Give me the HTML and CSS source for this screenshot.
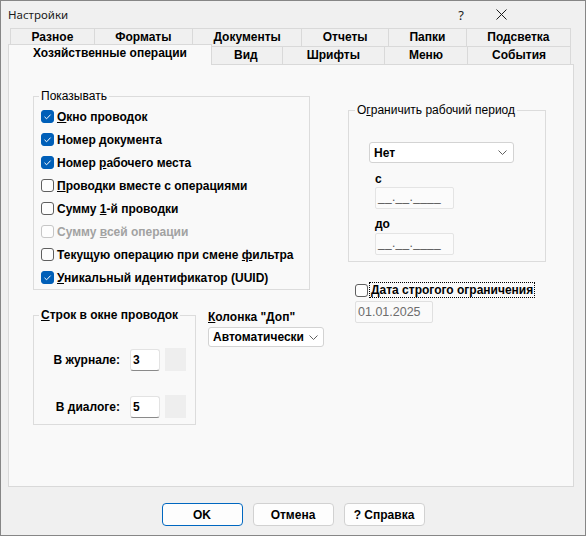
FILE: index.html
```html
<!DOCTYPE html>
<html lang="ru">
<head>
<meta charset="utf-8">
<title>Настройки</title>
<link rel="stylesheet" href="styles.css">
</head>
<body>
<div class="window">
  <div class="titlebar">
    <span class="title">Настройки</span>
    <span class="tb-btn tb-help">?</span>
    <span class="tb-btn tb-close">
      <svg width="11" height="11" viewBox="0 0 11 11"><path d="M0.5 0.5 L10.5 10.5 M10.5 0.5 L0.5 10.5" stroke="#1b1b1b" stroke-width="1" fill="none"/></svg>
    </span>
  </div>

  <div class="tabs">
    <div class="tab-row">
      <div class="tab">Разное</div>
      <div class="tab">Форматы</div>
      <div class="tab">Документы</div>
      <div class="tab">Отчеты</div>
      <div class="tab">Папки</div>
      <div class="tab">Подсветка</div>
    </div>
    <div class="tab-row">
      <div class="tab active">Хозяйственные операции</div>
      <div class="tab">Вид</div>
      <div class="tab">Шрифты</div>
      <div class="tab">Меню</div>
      <div class="tab">События</div>
    </div>
  </div>

  <div class="panel">
    <div class="col-left">
      <fieldset class="group group-show">
        <legend>Показывать</legend>
        <div class="show-list">
          <div class="check"><span class="box checked"><svg width="13" height="13" viewBox="0 0 13 13"><path d="M3.5 6.8 L5.6 8.8 L9.6 4.6" stroke="#fff" stroke-width="1" fill="none"/></svg></span><span><u>О</u>кно проводок</span></div>
          <div class="check"><span class="box checked"><svg width="13" height="13" viewBox="0 0 13 13"><path d="M3.5 6.8 L5.6 8.8 L9.6 4.6" stroke="#fff" stroke-width="1" fill="none"/></svg></span><span>Номер <u>д</u>окумента</span></div>
          <div class="check"><span class="box checked"><svg width="13" height="13" viewBox="0 0 13 13"><path d="M3.5 6.8 L5.6 8.8 L9.6 4.6" stroke="#fff" stroke-width="1" fill="none"/></svg></span><span>Номер <u>р</u>абочего места</span></div>
          <div class="check"><span class="box"></span><span><u>П</u>роводки вместе с операциями</span></div>
          <div class="check"><span class="box"></span><span>Сумму <u>1</u>-й проводки</span></div>
          <div class="check disabled"><span class="box"></span><span>Сумму <u>в</u>сей операции</span></div>
          <div class="check"><span class="box"></span><span>Текущую операцию при смене <u>ф</u>ильтра</span></div>
          <div class="check"><span class="box checked"><svg width="13" height="13" viewBox="0 0 13 13"><path d="M3.5 6.8 L5.6 8.8 L9.6 4.6" stroke="#fff" stroke-width="1" fill="none"/></svg></span><span><u>У</u>никальный идентификатор (UUID)</span></div>
        </div>
      </fieldset>

      <div class="lower">
        <fieldset class="group group-rows">
          <legend><u>С</u>трок в окне проводок</legend>
          <div class="rows-grid">
            <span class="row-label">В журнале:</span>
            <span class="spin-input">3</span>
            <span class="spin-btn"></span>
            <span class="row-label">В диалоге:</span>
            <span class="spin-input">5</span>
            <span class="spin-btn"></span>
          </div>
        </fieldset>

        <div class="extra-col">
          <div class="extra-label"><u>К</u>олонка "Доп"</div>
          <div class="select select-auto">
            <span>Автоматически</span>
            <svg width="9" height="5" viewBox="0 0 9 5"><path d="M0.5 0.5 L4.5 4.5 L8.5 0.5" stroke="#606060" stroke-width="1" fill="none"/></svg>
          </div>
        </div>
      </div>
    </div>

    <div class="col-right">
      <fieldset class="group group-period">
        <legend>О<u>г</u>раничить рабочий период</legend>
        <div class="period-body">
          <div class="select select-none">
            <span>Нет</span>
            <svg width="9" height="5" viewBox="0 0 9 5"><path d="M0.5 0.5 L4.5 4.5 L8.5 0.5" stroke="#606060" stroke-width="1" fill="none"/></svg>
          </div>
          <div class="field-label">с</div>
          <div class="date-input">__.__.____</div>
          <div class="field-label field-label-to">до</div>
          <div class="date-input date-input-to">__.__.____</div>
        </div>
      </fieldset>

      <div class="check strict">
        <span class="box"></span>
        <span class="focus-label"><u>Д</u>ата строгого ограничения</span>
      </div>
      <div class="date-fixed">01.01.2025</div>
    </div>
  </div>

  <div class="buttons">
    <button class="btn btn-primary">OK</button>
    <button class="btn">Отмена</button>
    <button class="btn">? Справка</button>
  </div>
</div>
</body>
</html>
```

FILE: styles.css
```css
* {
  box-sizing: border-box;
}

html,
body {
  margin: 0;
  padding: 0;
}

body {
  width: 586px;
  height: 536px;
  overflow: hidden;
  background: #f0f0f0;
  font-family: "Liberation Sans", Arial, sans-serif;
  font-size: 12px;
  color: #000;
}

.window {
  width: 586px;
  height: 536px;
  border: 1px solid #868686;
  background: #f0f0f0;
  display: flex;
  flex-direction: column;
}

/* ---------- title bar ---------- */
.titlebar {
  height: 27px;
  flex: none;
  display: flex;
  align-items: center;
  padding-left: 7px;
  font-family: "Noto Sans", "Liberation Sans", sans-serif;
  font-size: 11.5px;
  color: #1b1b1b;
}

.title {
  flex: 1;
}

.tb-btn {
  width: 40px;
  height: 27px;
  display: flex;
  align-items: center;
  justify-content: center;
}

.tb-help {
  font-size: 13px;
}

.tb-close {
  margin-right: 64px;
}

/* ---------- tabs ---------- */
.tabs {
  flex: none;
  width: 570px;
  padding-left: 9px;
}

.tab-row {
  display: flex;
  height: 18px;
}

.tab {
  flex: 1 1 auto;
  border: 1px solid #d9d9d9;
  border-bottom: 0;
  margin-left: -1px;
  padding: 0 6px;
  text-align: center;
  font-weight: bold;
  line-height: 16px;
  white-space: nowrap;
  background: #f0f0f0;
}

.tab:first-child {
  margin-left: 0;
}

.tab.active {
  position: relative;
  z-index: 1;
  margin: -2px -2px -1px -2px;
  padding-top: 0;
  line-height: 17px;
  background: #f9f9f9;
}

/* ---------- page panel ---------- */
.panel {
  flex: none;
  width: 566px;
  height: 423px;
  margin-left: 7px;
  border: 1px solid #d9d9d9;
  background: #f9f9f9;
  display: grid;
  grid-template-columns: 291px 198px;
  column-gap: 24px;
  padding-left: 24px;
  align-items: start;
}

.col-left {
  padding-top: 24px;
}

.col-right {
  padding-top: 38px;
}

/* group boxes */
.group {
  margin: 0;
  padding: 0;
  min-width: 0;
  border: 1px solid #dcdcdc;
}

.group legend {
  margin-left: 5px;
  padding: 0 2px;
  line-height: 14px;
  font-size: 12px;
}

.group-show {
  width: 277px;
}

.show-list {
  padding: 2px 0 0 7px;
}

/* check boxes */
.check {
  display: flex;
  align-items: center;
  height: 23px;
  font-weight: bold;
  white-space: nowrap;
}

.box {
  flex: none;
  width: 13px;
  height: 13px;
  margin-right: 3px;
  border: 1px solid #5f5f5f;
  border-radius: 3px;
  background: #fdfdfd;
  display: flex;
}

.box svg {
  margin: -1px;
}

.box.checked {
  border-color: #005fb8;
  background: #005fb8;
}

.check.disabled {
  color: #a2a2a2;
}

.check.disabled .box {
  border-color: #c6c6c6;
}

/* lower left */
.lower {
  display: flex;
  align-items: flex-start;
  gap: 12px;
  margin-top: 18px;
}

.group-rows {
  width: 163px;
}

.group-rows legend {
  font-weight: bold;
}

.rows-grid {
  display: grid;
  grid-template-columns: 86px 30px 16px;
  column-gap: 10px;
  row-gap: 24px;
  align-items: center;
  padding: 26px 0 6px 0;
}

.row-label {
  text-align: right;
  font-weight: bold;
}

.spin-input {
  height: 22px;
  padding: 1px 0 0 2px;
  line-height: 18px;
  font-weight: bold;
  background: #fff;
  border: 1px solid #e3e3e3;
  border-bottom-color: #8a8a8a;
  border-radius: 3px;
}

.spin-btn {
  height: 23px;
  margin-left: -5px;
  background: #eeeeee;
}

.extra-col {
  width: 116px;
  padding-top: 2px;
}

.extra-label {
  line-height: 14px;
  font-weight: bold;
  white-space: nowrap;
}

/* drop-down boxes */
.select {
  display: flex;
  align-items: center;
  justify-content: space-between;
  background: #fff;
  border: 1px solid #d3d3d3;
  border-radius: 3px;
  font-weight: bold;
  white-space: nowrap;
  overflow: hidden;
}

.select-auto {
  height: 20px;
  margin-top: 3px;
  padding: 0 5px 0 4px;
}

.select-none {
  width: 145px;
  height: 21px;
  padding: 0 6px 0 4px;
}

/* right column */
.group-period {
  width: 198px;
}

.group-period legend {
  margin-left: 6px;
}

.period-body {
  padding: 25px 0 6px 20px;
}

.field-label {
  margin-top: 9px;
  padding-left: 6px;
  line-height: 14px;
  font-weight: bold;
}

.field-label-to {
  margin-top: 8px;
}

.date-input {
  width: 79px;
  height: 22px;
  margin: 1px 0 0 6px;
  padding: 0 0 0 2px;
  line-height: 19px;
  color: #555;
  background: #fbfbfb;
  border: 1px solid #e4e4e4;
  border-radius: 2px;
  letter-spacing: 0.3px;
}

.date-input-to {
  margin-top: 2px;
}

.strict {
  height: 16px;
  margin: 20px 0 0 7px;
}

.strict .box {
  margin-right: 2px;
}

.focus-label {
  padding: 0 1px;
  line-height: 14px;
  outline: 1px dotted #000;
}

.date-fixed {
  width: 78px;
  height: 22px;
  margin: 3px 0 0 7px;
  padding-left: 2px;
  line-height: 20px;
  color: #6d6d6d;
  font-size: 12.5px;
  background: #fafafa;
  border: 1px solid #e0e0e0;
  border-radius: 2px;
}

/* ---------- dialog buttons ---------- */
.buttons {
  flex: none;
  display: flex;
  justify-content: center;
  gap: 10px;
  padding-top: 16px;
}

.btn {
  width: 81px;
  height: 23px;
  padding: 0;
  font-family: "Liberation Sans", Arial, sans-serif;
  font-size: 12px;
  font-weight: bold;
  color: #000;
  background: #fdfdfd;
  border: 1px solid #d1d1d1;
  border-radius: 4px;
}

.btn-primary {
  border-color: #0067c0;
}
```
